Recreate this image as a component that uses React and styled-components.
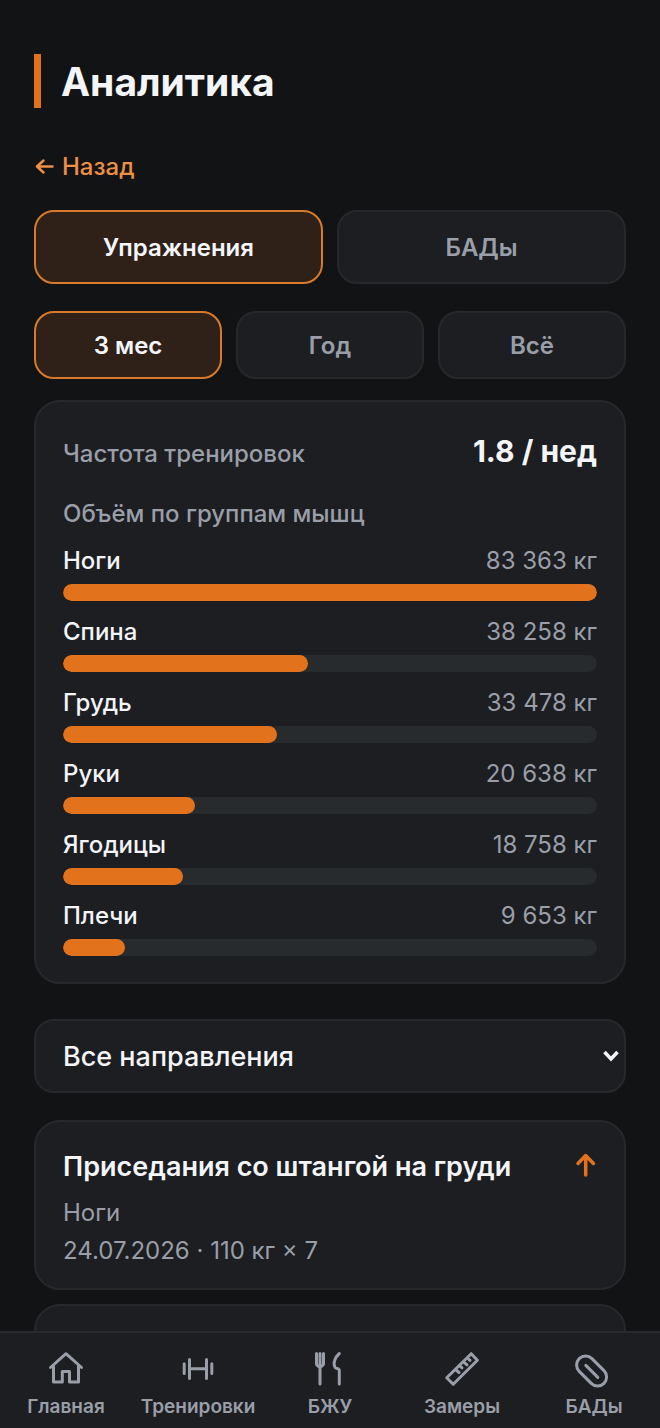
import styled, { createGlobalStyle } from "styled-components";
import { useState } from "react";

const volumes = [
  { name: "Ноги", value: 83363 },
  { name: "Спина", value: 38258 },
  { name: "Грудь", value: 33478 },
  { name: "Руки", value: 20638 },
  { name: "Ягодицы", value: 18758 },
  { name: "Плечи", value: 9653 },
];
const maxVolume = Math.max(...volumes.map(v => v.value));

const formatKg = value =>
  `${String(value).replace(/\B(?=(\d{3})+$)/g, "\u00a0")} кг`;

const navItems = [
  { label: "Главная", icon: <HomeIcon /> },
  { label: "Тренировки", icon: <DumbbellIcon /> },
  { label: "БЖУ", icon: <CutleryIcon /> },
  { label: "Замеры", icon: <RulerIcon /> },
  { label: "БАДы", icon: <PillIcon /> },
];

const App = () => {
  const [section, setSection] = useState("Упражнения");
  const [period, setPeriod] = useState("3 мес");
  return (
    <Shell>
      <GlobalStyle />
      <Content>
        <Title>Аналитика</Title>
        <BackLink href="#">
          <BackIcon />
          Назад
        </BackLink>
        <Tabs>
          {["Упражнения", "БАДы"].map(name => (
            <Tab
              key={name}
              type="button"
              $active={name === section}
              onClick={() => setSection(name)}
            >
              {name}
            </Tab>
          ))}
        </Tabs>
        <Tabs $compact>
          {["3 мес", "Год", "Всё"].map(name => (
            <Tab
              key={name}
              type="button"
              $compact
              $active={name === period}
              onClick={() => setPeriod(name)}
            >
              {name}
            </Tab>
          ))}
        </Tabs>
        <StatsCard>
          <Frequency>
            <Caption>Частота тренировок</Caption>
            <strong>1.8 / нед</strong>
          </Frequency>
          <Caption>Объём по группам мышц</Caption>
          <VolumeList>
            {volumes.map(item => (
              <Volume key={item.name} item={item} />
            ))}
          </VolumeList>
        </StatsCard>
        <SelectBox>
          <select aria-label="Все направления">
            <option>Все направления</option>
          </select>
          <ChevronIcon />
        </SelectBox>
        <Exercises>
          <Exercise>
            <div>
              <h3>Приседания со штангой на груди</h3>
              <p>Ноги</p>
              <p>24.07.2026 · 110 кг × 7</p>
            </div>
            <UpIcon />
          </Exercise>
          <Exercise />
        </Exercises>
      </Content>
      <Nav>
        {navItems.map(item => (
          <NavLink key={item.label} href="#">
            {item.icon}
            {item.label}
          </NavLink>
        ))}
      </Nav>
    </Shell>
  );
};

export default App;

const Volume = ({ item }) => {
  return (
    <li>
      <VolumeLabel>
        <b>{item.name}</b>
        <span>{formatKg(item.value)}</span>
      </VolumeLabel>
      <Track>
        <Fill style={{ width: `${(item.value / maxVolume) * 100}%` }} />
      </Track>
    </li>
  );
};

/* ---------------------------------- ICONS --------------------------------- */

function HomeIcon() {
  return (
    <NavIcon viewBox="0 0 36 36">
      <path d="M2.500 17.500 18 3.700l15.500 13.800M5.500 15.500v16.500h8.800V21.500h7.200V32h9V15.500" />
    </NavIcon>
  );
}

function DumbbellIcon() {
  return (
    <NavIcon viewBox="0 0 36 36">
      <path d="M9.500 9.500v19M26.500 9.500v19M4.200 13.800v9.700M31.800 13.800v9.700M9.500 18.700h17" />
    </NavIcon>
  );
}

function CutleryIcon() {
  return (
    <NavIcon viewBox="0 0 36 36">
      <path d="M4.500 3.500v10.500c0 2.500 3.500 2 3.500 4.500v15.500M8 3.500v11M11.500 3.500v10.500c0 2-3 2-3.300 4" />
      <path d="M27.300 3.500c-4 3.500-6.800 10-4.200 14 1 1.500 4.200.5 4.200 3v13.500" />
    </NavIcon>
  );
}

function RulerIcon() {
  return (
    <NavIcon viewBox="0 0 36 36">
      <path d="M2.700 27.700 27.200 3.700l6.200 6.600L9.200 34.200ZM11.500 19.500l3.500 3M15.500 15.500l2.500 2.300M19.500 11.800l3.500 3M23.500 8l2.500 2.300" />
    </NavIcon>
  );
}

function PillIcon() {
  return (
    <NavIcon viewBox="0 0 36 36">
      <rect x="-1.900" y="12" width="35" height="18" rx="9" transform="rotate(45 15.600 21)" />
      <path d="m9.800 15.400 12 12" />
    </NavIcon>
  );
}

function BackIcon() {
  return (
    <svg width="20" height="20" viewBox="0 0 20 20" aria-hidden="true">
      <path strokeWidth="2.500" d="M18.500 9.500H3M9.500 3.500 3 9.500l6.500 6" />
    </svg>
  );
}

function UpIcon() {
  return (
    <svg width="24" height="28" viewBox="0 0 24 28" aria-hidden="true">
      <path strokeWidth="3.500" d="M12.700 24V5M5 12.500l7.700-8 7.700 8" />
    </svg>
  );
}

function ChevronIcon() {
  return (
    <svg width="16" height="12" viewBox="0 0 16 12" aria-hidden="true">
      <path strokeWidth="3.500" strokeLinecap="butt" strokeLinejoin="miter" d="m1.500 2 6.500 7 6.500-7" />
    </svg>
  );
}

/* ---------------------------- STYLED COMPONENTS --------------------------- */

const GlobalStyle = createGlobalStyle`
  * {
    box-sizing: border-box;
    margin: 0;
    padding: 0;
  }
  body {
    background: #111315;
    color: #f4f5f8;
    font-family: Inter, "Noto Sans", sans-serif;
    font-size: 24px;
    line-height: 38px;
  }
  svg {
    flex: none;
    fill: none;
    stroke: currentColor;
    stroke-linecap: round;
    stroke-linejoin: round;
    stroke-width: 3;
  }
  button,
  select {
    font: inherit;
  }
`;

const Shell = styled.div`
  display: flex;
  flex-direction: column;
  height: 100vh;
`;

const Content = styled.main`
  display: flex;
  flex-direction: column;
  flex: 1;
  min-height: 0;
  padding: 54px 34px 0;
  overflow-y: auto;
  scrollbar-width: none;
  > * {
    flex: none;
  }
`;

const Title = styled.h1`
  border-left: 7px solid #e2731c;
  padding: 2px 0 0 20px;
  margin-bottom: 40px;
  font-size: 39px;
  font-weight: 700;
  line-height: 52px;
`;

const BackLink = styled.a`
  display: flex;
  align-items: center;
  align-self: flex-start;
  gap: 8px;
  margin-bottom: 24px;
  color: #ee8f46;
  font-weight: 500;
  text-decoration: none;
`;

const Tabs = styled.div`
  display: flex;
  gap: 14px;
  margin-bottom: ${props => (props.$compact ? "21px" : "27px")};
`;

const Tab = styled.button`
  flex: 1;
  height: ${props => (props.$compact ? "68px" : "74px")};
  padding-top: 2px;
  border: 2px solid ${props => (props.$active ? "#d97a2b" : "#26292c")};
  border-radius: 20px;
  background: ${props => (props.$active ? "#2f2118" : "#1c1e22")};
  color: ${props => (props.$active ? "#f4f5f8" : "#9a9ea8")};
  font-weight: 600;
  cursor: pointer;
`;

const Card = styled.section`
  border: 2px solid #26292c;
  border-radius: 26px;
  background: #1c1e22;
`;

const StatsCard = styled(Card)`
  margin-bottom: 35px;
  padding: 27px 27px 26px;
`;

const Frequency = styled.div`
  display: flex;
  align-items: baseline;
  justify-content: space-between;
  margin-bottom: 22px;
  strong {
    font-size: 30px;
    font-weight: 700;
    line-height: 44px;
  }
`;

const Caption = styled.h2`
  color: #9a9ea8;
  font-size: 24px;
  font-weight: 500;
`;

const VolumeList = styled.ul`
  display: grid;
  gap: 12px;
  margin-top: 9px;
  list-style: none;
`;

const VolumeLabel = styled.div`
  display: flex;
  justify-content: space-between;
  margin-bottom: 4px;
  b {
    font-weight: 500;
  }
  span {
    color: #9a9ea8;
  }
`;

const Track = styled.div`
  height: 17px;
  border-radius: 9px;
  background: #282b2e;
  overflow: hidden;
`;

const Fill = styled.div`
  height: 100%;
  border-radius: 9px;
  background: #e2731c;
`;

const SelectBox = styled.div`
  position: relative;
  margin-bottom: 27px;
  select {
    display: block;
    width: 100%;
    height: 74px;
    padding: 2px 27px 0;
    border: 2px solid #26292c;
    border-radius: 20px;
    background: #1c1e22;
    color: #f4f5f8;
    font-size: 27px;
    font-weight: 500;
    appearance: none;
  }
  svg {
    position: absolute;
    top: 31px;
    right: 7px;
    pointer-events: none;
  }
`;

const Exercises = styled.div`
  display: grid;
  gap: 14px;
`;

const Exercise = styled(Card)`
  display: flex;
  justify-content: space-between;
  min-height: 169px;
  padding: 18px 27px;
  color: #9a9ea8;
  line-height: 38px;
  h3 {
    color: #f4f5f8;
    font-size: 27px;
    font-weight: 600;
    line-height: 54px;
  }
  svg {
    margin-top: 11px;
    color: #e2731c;
  }
`;

const Nav = styled.nav`
  display: flex;
  height: 97px;
  border-top: 2px solid #282b2e;
  background: #1c1e22;
`;

const NavLink = styled.a`
  display: flex;
  flex: 1;
  flex-direction: column;
  align-items: center;
  gap: 9px;
  padding-top: 17px;
  color: #9a9ea8;
  font-size: 19px;
  font-weight: 600;
  line-height: 24px;
  text-decoration: none;
`;

const NavIcon = styled.svg.attrs({ "aria-hidden": true })`
  width: 36px;
  height: 36px;
  overflow: visible;
`;
